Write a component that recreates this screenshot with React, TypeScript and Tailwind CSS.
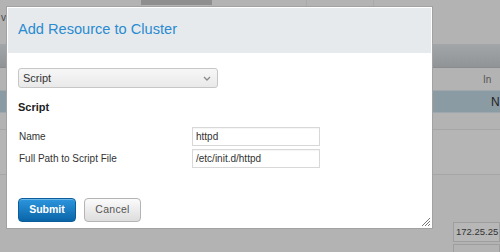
import React from "react";

const font = { fontFamily: '"Liberation Sans", Arial, sans-serif' };

function Background() {
  return (
    <div className="flex h-[252px] w-[500px] flex-col overflow-hidden bg-[#b3b3b3]">
      <div className="flex h-[44px] shrink-0">
        <div className="w-[141px] shrink-0 pt-[10px] pl-[1px] text-[10px] text-[#4a4a4a]">v</div>
        <div className="h-[5px] w-[71px] shrink-0 bg-[#8f8f8f]" />
        <div className="h-[7px] w-[95px] shrink-0 border-r border-[#a9a9a9]" />
        <div className="h-[7px] w-[67px] shrink-0 border-r border-[#a9a9a9]" />
      </div>
      <div className="h-[24px] shrink-0 border-b border-[#8a8c8e] bg-gradient-to-b from-[#a3a6a9] to-[#919497]" />
      <div className="flex h-[22px] shrink-0 items-center">
        <div className="w-[483px] shrink-0" />
        <span className="whitespace-nowrap text-[10px] text-[#555]">In</span>
      </div>
      <div className="flex h-[23px] shrink-0 items-center border-y border-[#a0a8ad] bg-[#8b9ba4]">
        <div className="w-[491px] shrink-0" />
        <span className="whitespace-nowrap text-[12px] text-[#222]">N</span>
      </div>
      <div className="h-[16px] shrink-0" />
      <div className="h-[46px] shrink-0 border-y border-[#a6a6a6] bg-[#b5b5b5]" />
      <div className="flex shrink-0 flex-col items-end pt-[47px]">
        <div className="flex h-[20px] w-[47px] items-center border border-[#9e9e9e] bg-[#b7b7b7] pl-[2px]">
          <span className="whitespace-nowrap text-[9.5px] text-[#333]">172.25.25</span>
        </div>
        <div className="mt-[2px] h-[10px] w-[47px] border border-[#9e9e9e]" />
      </div>
    </div>
  );
}

function Field({ label, value }: { label: string; value: string }) {
  return (
    <div className="flex h-[19px] items-center">
      <label className="w-[174px] shrink-0 pl-[1px] text-[10px] text-[#333]">{label}</label>
      <div className="flex h-[19px] w-[128px] items-center border border-[#d8d8d8] bg-white pl-[3px] shadow-[inset_0_1px_1px_rgba(0,0,0,0.04)]">
        <span className="text-[10px] text-[#333]">{value}</span>
      </div>
    </div>
  );
}

export default function App() {
  return (
    <div className="relative h-[252px] w-[500px] overflow-hidden" style={font}>
      <Background />
      <div className="absolute left-[6px] top-[6px] flex h-[223px] w-[427px] flex-col border border-[#a2a2a2] bg-white p-[1px]">
        <div className="flex h-[45px] shrink-0 items-center bg-[#e6eaed] pl-[10px] pb-[1px]">
          <h1 className="text-[14.6px] text-[#2a8bd0]">Add Resource to Cluster</h1>
        </div>
        <div className="flex flex-col px-[10px] pt-[15px]">
          <div className="flex h-[20px] w-[200px] items-center justify-between rounded-[3px] border border-[#c6c6c6] bg-gradient-to-b from-[#f7f7f7] to-[#e9e9e9] pl-[4px] pr-[6px]">
            <span className="text-[11px] text-[#333]">Script</span>
            <svg width="8" height="5" viewBox="0 0 8 5">
              <polyline points="1,1 4,4 7,1" fill="none" stroke="#8a8a8a" strokeWidth="1.3" />
            </svg>
          </div>
          <h2 className="mt-[13px] text-[11px] font-bold leading-[13px] text-[#222]">Script</h2>
          <div className="mt-[13px] flex flex-col gap-[3px]">
            <Field label="Name" value="httpd" />
            <Field label="Full Path to Script File" value="/etc/init.d/httpd" />
          </div>
          <div className="mt-[30px] flex gap-[8px]">
            <button className="h-[24px] w-[58px] rounded-[4px] border border-[#0b5e9b] bg-gradient-to-b from-[#2c96de] to-[#0865a8] text-[10.5px] font-bold text-white shadow-[inset_0_1px_0_rgba(255,255,255,0.3)]">
              Submit
            </button>
            <button className="h-[24px] w-[57px] rounded-[4px] border border-[#b4b4b4] bg-gradient-to-b from-[#fbfbfb] to-[#dddddd] text-[10.5px] tracking-[0.3px] text-[#555]">
              Cancel
            </button>
          </div>
        </div>
        <svg className="absolute bottom-[2px] right-[2px]" width="9" height="9" viewBox="0 0 9 9">
          <line x1="1" y1="9" x2="9" y2="1" stroke="#555" strokeWidth="0.8" />
          <line x1="4" y1="9" x2="9" y2="4" stroke="#555" strokeWidth="0.8" />
          <line x1="7" y1="9" x2="9" y2="7" stroke="#555" strokeWidth="0.8" />
        </svg>
      </div>
    </div>
  );
}
